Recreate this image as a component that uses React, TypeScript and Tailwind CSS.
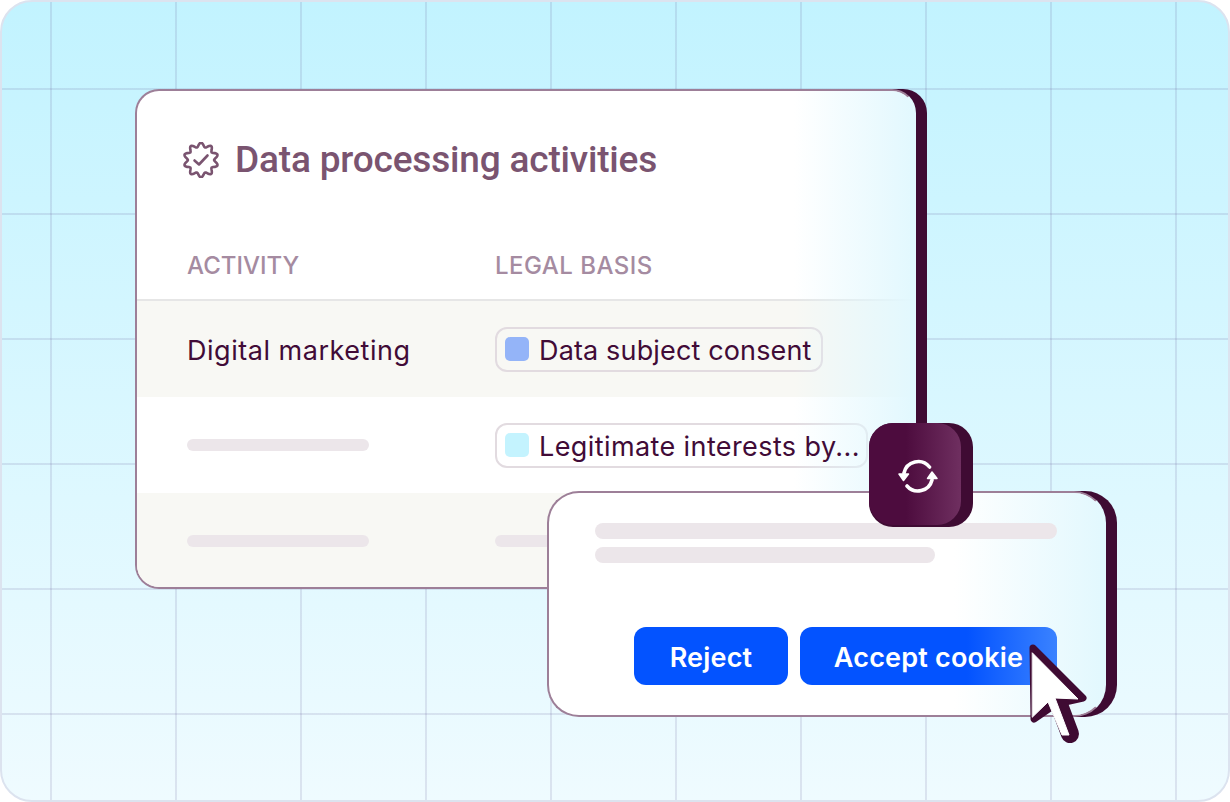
const FONT = "font-['Inter',sans-serif]";

// wavy badge outline, 10 bumps round a centre of 18,18
const badgePath = (() => {
  const pts: string[] = [];
  for (let i = 0; i < 120; i++) {
    const t = (i / 120) * Math.PI * 2;
    const r = 15.2 + 2.1 * Math.cos(t * 10);
    const a = t - Math.PI / 2;
    pts.push(`${(18 + r * Math.cos(a)).toFixed(2)} ${(18 + r * Math.sin(a)).toFixed(2)}`);
  }
  return `M${pts.join("L")}Z`;
})();

function BadgeIcon() {
  return (
    <svg width="36" height="36" viewBox="0 0 36 36" fill="none" stroke="#7a5470" strokeWidth="2.6" strokeLinejoin="round" strokeLinecap="round">
      <path d={badgePath} />
      <path d="M11.500 18.500l4.500 4 8.500-9" />
    </svg>
  );
}

function SyncIcon() {
  return (
    <svg width="40" height="35" viewBox="0 0 40 35" fill="none" stroke="#fff" strokeWidth="3.6" strokeLinecap="round" strokeLinejoin="round">
      <path d="M6 14A14.500 14.500 0 0 1 31.500 8" />
      <path d="M34 21A14.500 14.500 0 0 1 9 27" />
      <path d="M1 15h9.500L5.500 21.500z" fill="#fff" strokeWidth="1.500" />
      <path d="M29.500 19.500H39L34 13z" fill="#fff" strokeWidth="1.500" />
    </svg>
  );
}

function Cursor() {
  return (
    <svg className="absolute left-[1018px] top-[634px]" width="76" height="116" viewBox="0 0 76 116" strokeLinejoin="round" strokeLinecap="round">
      <path d="M13 12 L63 62 L45 66 L30 72 L14 83 Z" fill="#3f0b33" stroke="#3f0b33" strokeWidth="7" />
      <path d="M38 66 L50 98" fill="none" stroke="#3f0b33" strokeWidth="18" />
      <path d="M12.500 17 L58 63 L35 62 L49 99 L42 99 L28 66 L12.500 81 Z" fill="#fff" stroke="#fff" strokeWidth="1" />
    </svg>
  );
}

function Pill({ color, textClass, padClass, children }: { color: string; textClass: string; padClass: string; children: string }) {
  return (
    <div className={`flex h-[45px] w-fit items-center gap-[10px] rounded-[12px] border-2 border-[#e2dbe0] pl-2 ${padClass}`}>
      <span className={`h-6 w-6 rounded-[5px] ${color}`} />
      <span className={`relative z-10 pt-[2px] text-[27px] leading-none text-[#410b37] ${textClass}`}>{children}</span>
    </div>
  );
}

function Skeleton() {
  return <div className="h-3 w-[182px] rounded-full bg-[#ece6ea]" />;
}

export default function App() {
  return (
    <div className={`${FONT} relative h-[802px] w-[1230px] overflow-hidden rounded-[32px] border-2 border-[#dce3ef] bg-[linear-gradient(180deg,#c2f3ff_0%,#effbff_100%)]`}>
      {/* grid lines */}
      <div className="absolute inset-0 bg-[linear-gradient(90deg,rgba(100,90,150,0.15)_2px,transparent_2px),linear-gradient(180deg,rgba(100,90,150,0.15)_2px,transparent_2px)] bg-[size:125px_125px] bg-[position:48px_86px]" />

      {/* data card */}
      <div className="relative ml-[133px] mt-[87px] h-[500px] w-[781px] overflow-hidden rounded-[24px] border-2 border-[#9d7f98] border-r-[#e2f8fe] bg-white shadow-[11px_0_0_0_#3f0b33]">
        <div className="flex items-center gap-4 pl-[46px] pt-[50px]">
          <BadgeIcon />
          <h1 className="font-['Roboto',sans-serif] text-[37px] font-medium leading-[38px] tracking-[-0.18px] text-[#7a5470]">Data processing activities</h1>
        </div>
        <div className="mt-[67px] flex h-[55px] border-b-2 border-[#e6e6e6] pl-[50px] pt-[4px] text-[24px] font-medium leading-8 text-[#a58ba1]">
          <span className="w-[308px]">ACTIVITY</span>
          <span className="tracking-[0.02em]">LEGAL BASIS</span>
        </div>
        <div className="flex h-[96px] items-center bg-[#f8f8f4] pl-[50px]">
          <span className="w-[308px] pt-[2px] text-[27px] leading-none tracking-[0.53px] text-[#410b37]">Digital marketing</span>
          <Pill color="bg-[#94b4f8]" textClass="tracking-[0.15px]" padClass="pr-[9px]">Data subject consent</Pill>
        </div>
        <div className="flex h-[96px] items-center pl-[50px]">
          <div className="w-[308px]"><Skeleton /></div>
          <Pill color="bg-[#c4f3fe]" textClass="tracking-[0.4px]" padClass="pr-[6px]">Legitimate interests by...</Pill>
        </div>
        <div className="flex h-[96px] items-center bg-[#f8f8f4] pl-[50px]">
          <div className="w-[308px]"><Skeleton /></div>
          <Skeleton />
        </div>
        <div className="pointer-events-none absolute inset-y-0 right-0 w-[120px] bg-gradient-to-r from-[#e2f8fe00] to-[#e2f8fe]" />
      </div>

      {/* cookie banner */}
      <div className="absolute left-[545px] top-[489px] h-[226px] w-[559px] overflow-hidden rounded-[32px] border-2 border-[#9d7f98] border-r-[#e2f8fe] bg-white shadow-[11px_0_0_0_#3f0b33]">
        <div className="absolute inset-y-0 right-0 w-[150px] bg-gradient-to-r from-[#e2f8fe00] to-[#e2f8fe]" />
        <div className="relative flex h-full flex-col pb-[30px] pl-[46px] pr-[47px] pt-[30px]">
          <div className="h-4 w-[462px] rounded-full bg-[#ece6ea]" />
          <div className="mt-2 h-4 w-[340px] rounded-full bg-[#ece6ea]" />
          <div className="mt-auto flex justify-end gap-3 text-[27px] font-semibold tracking-[0.2px] text-white">
            <button className="h-[58px] w-[154px] rounded-[12px] bg-[#0353ff] pt-[4px]">Reject</button>
            <button className="h-[58px] w-[257px] rounded-[12px] bg-[linear-gradient(90deg,#0353ff_65%,#3a82ff_100%)] pt-[4px]">Accept cookie</button>
          </div>
        </div>
      </div>

      {/* sync button */}
      <div className="absolute left-[867px] top-[421px] h-[104px] w-[104px] rounded-[24px] bg-[#3f0b33]">
        <div className="flex h-[102px] w-[92px] items-center justify-center rounded-[24px] bg-[linear-gradient(90deg,#4d0c3e_40%,#6f2f60_100%)] pl-[5px] pt-[4px]">
          <SyncIcon />
        </div>
      </div>

      <Cursor />
    </div>
  );
}
